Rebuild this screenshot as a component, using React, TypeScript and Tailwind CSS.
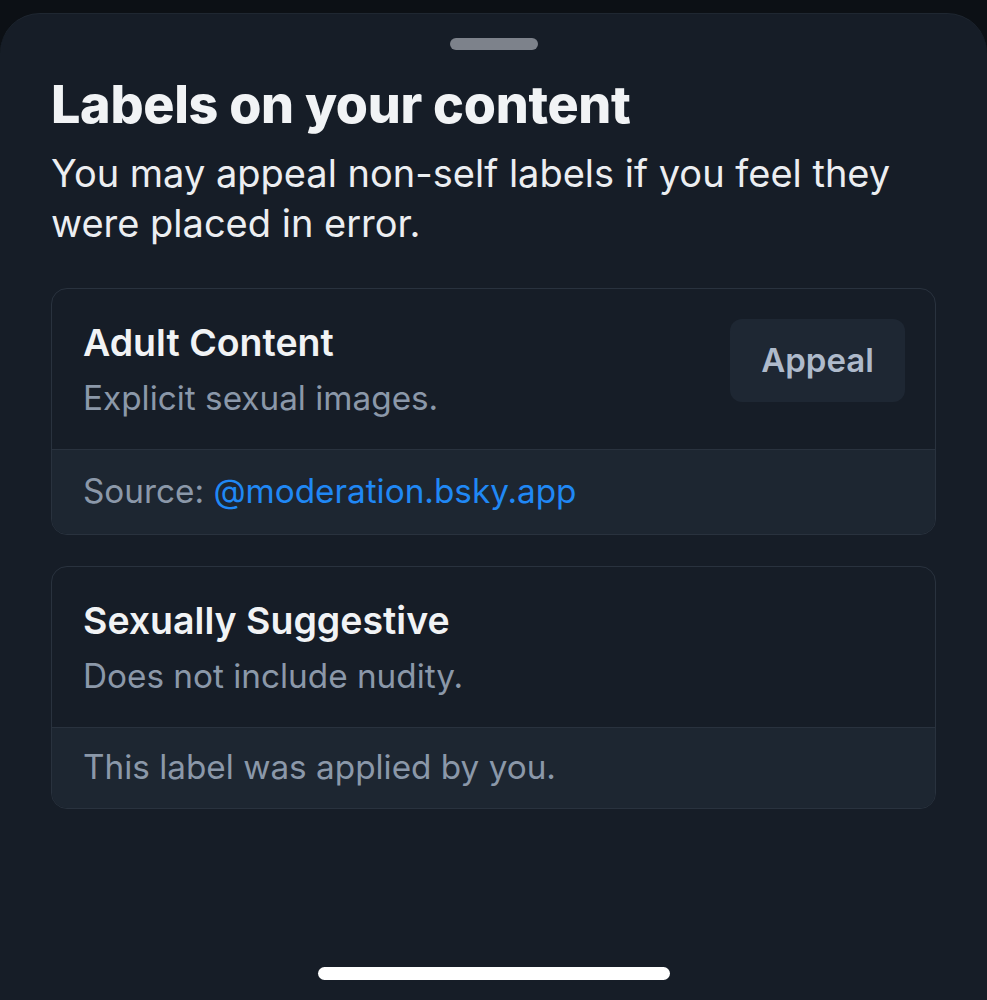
import React from "react";

type LabelItem = {
  title: string;
  description: string;
  appealable: boolean;
  source?: string;
};

const labels: LabelItem[] = [
  {
    title: "Adult Content",
    description: "Explicit sexual images.",
    appealable: true,
    source: "@moderation.bsky.app",
  },
  {
    title: "Sexually Suggestive",
    description: "Does not include nudity.",
    appealable: false,
  },
];

// One label card with its footer row
const LabelCard: React.FC<{ item: LabelItem }> = ({ item }) => {
  return (
    <div className="rounded-[16px] border border-[#29323e] overflow-hidden">
      <div className="flex items-start justify-between pl-[31px] pr-[30px] pt-[30px] pb-[29px]">
        <div className="flex flex-col">
          <h2 className="text-[37.5px] leading-[48px] font-semibold text-[#f1f3f5]">{item.title}</h2>
          <p className="text-[33.3px] leading-[44px] mt-[9px] text-[#8b98a9]">{item.description}</p>
        </div>
        {item.appealable && (
          <button className="bg-[#1e2733] rounded-[12px] w-[175px] h-[83px] text-[33px] font-semibold text-[#aebacb]">
            Appeal
          </button>
        )}
      </div>
      {item.source ? (
        <div className="bg-[#1d2631] border-t border-[#29323e] pl-[31px] h-[85px] flex items-center">
          <p className="text-[33.3px] text-[#8b98a9]">
            Source: <span className="text-[#2088f5]">{item.source}</span>
          </p>
        </div>
      ) : (
        <div className="bg-[#1d2631] border-t border-[#29323e] pl-[31px] h-[81px] flex items-center">
          <p className="text-[33.3px] text-[#8b98a9]">This label was applied by you.</p>
        </div>
      )}
    </div>
  );
};

const App: React.FC = () => {
  return (
    <div
      className="w-[987px] h-[1000px] bg-[#0c1015] pt-[13px] overflow-hidden"
      style={{ fontFamily: "Inter, 'Noto Sans', sans-serif" }}
    >
      <div className="h-[987px] bg-[#161d27] rounded-t-[40px] border-t border-[#1f2731] flex flex-col">
        {/* Drag handle */}
        <div className="flex justify-center pt-[24px]">
          <div className="w-[88px] h-[12px] rounded-full bg-[#7d828b]" />
        </div>

        <div className="px-[51px] pt-[25px]">
          <h1 className="text-[52px] leading-[60px] font-extrabold tracking-[-0.3px] text-[#f1f3f5]">
            Labels on your content
          </h1>
          <p className="text-[38px] leading-[50px] mt-[13px] text-[#eceef1]">
            You may appeal non-self labels if you feel they were placed in error.
          </p>

          <div className="flex flex-col gap-[31px] mt-[40px]">
            {labels.map((item) => (
              <LabelCard key={item.title} item={item} />
            ))}
          </div>
        </div>

        {/* Home indicator */}
        <div className="mt-auto mb-[20px] flex justify-center">
          <div className="w-[352px] h-[13px] rounded-full bg-white" />
        </div>
      </div>
    </div>
  );
};

export default App;
